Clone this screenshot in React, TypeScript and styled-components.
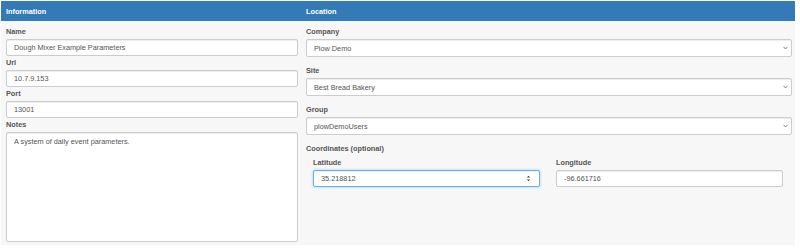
import styled, { createGlobalStyle, css } from "styled-components";

const GlobalStyle = createGlobalStyle`
  html, body {
    margin: 0;
    padding: 0;
    background: #ffffff;
  }
  body {
    font-family: "Liberation Sans", Arial, sans-serif;
    font-size: 7.3px;
    color: #555555;
  }
  * {
    box-sizing: border-box;
  }
`;

const Page = styled.div`
  width: 800px;
  height: 252px;
  padding: 1px 5px 7px 1px;
`;

const Panel = styled.div`
  height: 244px;
  background: #f7f7f7;
  display: flex;
  flex-direction: column;
`;

const Columns = styled.div`
  display: grid;
  grid-template-columns: 300px 1fr;
`;

const HeaderBar = styled(Columns)`
  height: 20px;
  background: #337ab7;
  color: #ffffff;
  font-weight: bold;
  align-items: center;
`;

const HeaderCell = styled.div`
  padding-left: 5px;
`;

const Body = styled(Columns)`
  flex: 1;
`;

const Column = styled.div`
  display: flex;
  flex-direction: column;
  padding: 4px 3px 3px 5px;
`;

const Field = styled.div<{ $spaced?: boolean }>`
  display: flex;
  flex-direction: column;
  margin-bottom: ${(p) => (p.$spaced ? "7px" : "0")};
`;

const Label = styled.label`
  display: block;
  height: 14px;
  line-height: 14px;
  font-weight: bold;
  color: #555555;
`;

const fieldBox = css`
  width: 100%;
  font-family: "Liberation Sans", Arial, sans-serif;
  font-size: 7.3px;
  color: #555555;
  background: #ffffff;
  border: 1px solid #cccccc;
  border-radius: 2px;
  box-shadow: inset 0 1px 1px rgba(0, 0, 0, 0.075);
  padding: 0 7px;
  outline: none;
`;

const TextInput = styled.input<{ $focused?: boolean }>`
  ${fieldBox};
  height: 17px;
  ${(p) =>
    p.$focused &&
    css`
      border-color: #66afe9;
      box-shadow: inset 0 1px 1px rgba(0, 0, 0, 0.075),
        0 0 3px rgba(102, 175, 233, 0.6);
    `}
`;

const NotesArea = styled.textarea`
  ${fieldBox};
  height: 110px;
  padding: 4px 7px;
  resize: none;
  line-height: 1.4;
`;

const FieldWrap = styled.div`
  position: relative;
`;

const Select = styled.select`
  ${fieldBox};
  height: 18px;
  appearance: none;
  -webkit-appearance: none;
`;

const Chevron = styled.svg`
  position: absolute;
  right: 4px;
  top: 7px;
  width: 5px;
  height: 4px;
  pointer-events: none;
`;

const Spinner = styled.svg`
  position: absolute;
  right: 9px;
  top: 5px;
  width: 5px;
  height: 7px;
  pointer-events: none;
`;

const CoordRow = styled.div`
  display: grid;
  grid-template-columns: 1fr 1fr;
  column-gap: 16px;
  padding: 0 9px 0 7px;
`;

function SelectField({ label, value }: { label: string; value: string }) {
  return (
    <Field $spaced>
      <Label>{label}</Label>
      <FieldWrap>
        <Select value={value} onChange={() => {}}>
          <option>{value}</option>
        </Select>
        <Chevron viewBox="0 0 5 4">
          <path d="M0.5 0.8 L2.5 3 L4.5 0.8" fill="none" stroke="#777" strokeWidth="0.9" />
        </Chevron>
      </FieldWrap>
    </Field>
  );
}

export default function App() {
  return (
    <Page>
      <GlobalStyle />
      <Panel>
        <HeaderBar>
          <HeaderCell>Information</HeaderCell>
          <HeaderCell>Location</HeaderCell>
        </HeaderBar>
        <Body>
          <Column>
            <Field>
              <Label>Name</Label>
              <TextInput readOnly value="Dough Mixer Example Parameters" />
            </Field>
            <Field>
              <Label>Url</Label>
              <TextInput readOnly value="10.7.9.153" />
            </Field>
            <Field>
              <Label>Port</Label>
              <TextInput readOnly value="13001" />
            </Field>
            <Field>
              <Label>Notes</Label>
              <NotesArea readOnly value="A system of daily event parameters." />
            </Field>
          </Column>
          <Column>
            <SelectField label="Company" value="Plow Demo" />
            <SelectField label="Site" value="Best Bread Bakery" />
            <SelectField label="Group" value="plowDemoUsers" />
            <Field>
              <Label>Coordinates (optional)</Label>
              <CoordRow>
                <Field>
                  <Label>Latitude</Label>
                  <FieldWrap>
                    <TextInput readOnly $focused value="35.218812" />
                    <Spinner viewBox="0 0 5 7">
                      <path d="M0.8 2.6 L2.5 0.8 L4.2 2.6 Z M0.8 4.4 L2.5 6.2 L4.2 4.4 Z" fill="#444" />
                    </Spinner>
                  </FieldWrap>
                </Field>
                <Field>
                  <Label>Longitude</Label>
                  <TextInput readOnly value="-96.661716" />
                </Field>
              </CoordRow>
            </Field>
          </Column>
        </Body>
      </Panel>
    </Page>
  );
}
